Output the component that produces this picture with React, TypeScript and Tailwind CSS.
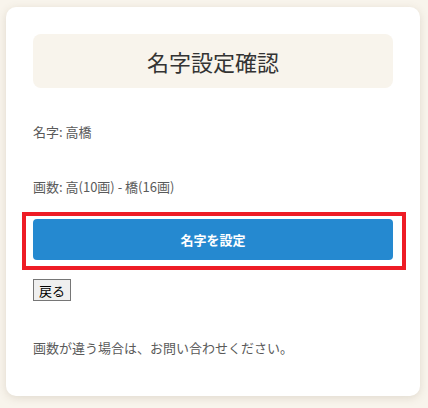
import React from "react";

const App: React.FC = () => {
  return (
    <div
      className="min-h-[408px] bg-[#f8f4ec] pl-[6px] pr-[8px] pt-[7px] pb-[12px]"
      style={{ fontFamily: '"Noto Sans CJK JP", "Noto Sans", sans-serif' }}
    >
      <div className="rounded-[10px] bg-white px-[27px] pt-[27px] pb-[27px] shadow-[0_2px_8px_rgba(120,100,70,0.18)]">
        {/* タイトル */}
        <div className="flex h-[54px] items-center justify-center rounded-[8px] bg-[#f8f4ec]">
          <h1 className="text-[22px] leading-none text-[#333]">名字設定確認</h1>
        </div>

        <p className="mt-[34px] text-[13px] leading-[20px] text-[#5a5a5a]">名字: 高橋</p>
        <p className="mt-[35px] text-[13px] leading-[20px] text-[#5a5a5a]">
          画数: 高(10画) - 橋(16画)
        </p>

        {/* 設定ボタン */}
        <div className="-ml-[11px] -mr-[13px] mt-[15px] border-[4px] border-[#ee1c25] pl-[7px] pr-[9px] pt-[3px] pb-[6px]">
          <button
            type="button"
            className="flex h-[41px] w-full items-center justify-center rounded-[4px] bg-[#2589d0] text-[13px] font-bold text-white"
          >
            名字を設定
          </button>
        </div>

        <button
          type="button"
          className="mt-[9px] h-[22px] border border-[#767676] bg-[#efefef] px-[5px] text-[13px] leading-none text-black"
        >
          戻る
        </button>

        <p className="mt-[37px] mb-[11px] text-[13px] leading-[20px] text-[#5a5a5a]">
          画数が違う場合は、お問い合わせください。
        </p>
      </div>
    </div>
  );
};

export default App;
